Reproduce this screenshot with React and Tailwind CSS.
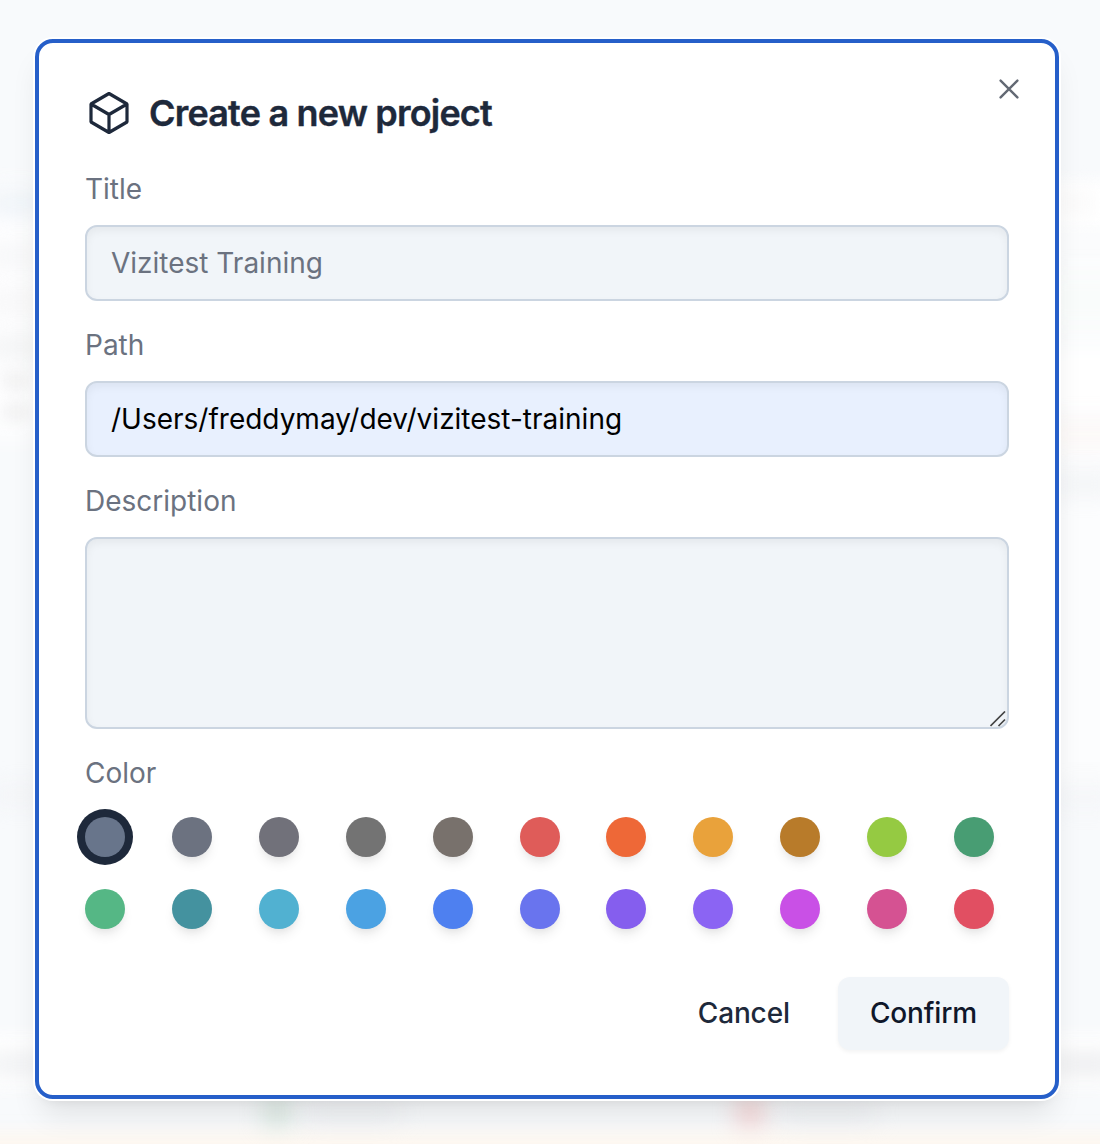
const swatches = [
  'bg-[#68758b]', 'bg-[#6c7280]', 'bg-[#71717a]', 'bg-[#737373]', 'bg-[#78716c]', 'bg-[#df5c59]',
  'bg-[#ee6837]', 'bg-[#e9a23b]', 'bg-[#b87b2a]', 'bg-[#95ca42]', 'bg-[#489d73]',
  'bg-[#55b785]', 'bg-[#44929f]', 'bg-[#51b1d1]', 'bg-[#4ba2e3]', 'bg-[#4e80f0]', 'bg-[#6974ee]',
  'bg-[#855eee]', 'bg-[#8b64f3]', 'bg-[#c950e6]', 'bg-[#d55292]', 'bg-[#e14f62]',
];

const smudges = [
  'left-[-20px] top-[180px] w-[60px] h-[260px] bg-white/80 blur-md',
  'left-[-10px] top-[194px] w-[60px] h-[18px] bg-[#e8eff5] blur-md',
  'left-[-10px] top-[248px] w-[60px] h-[16px] bg-[#f3f4f5] blur-md',
  'left-[-10px] top-[294px] w-[60px] h-[16px] bg-[#f4f4f4] blur-md',
  'left-[-10px] top-[340px] w-[60px] h-[14px] bg-[#eceeee] blur-md',
  'left-[4px] top-[374px] w-[24px] h-[14px] bg-[#ededed] blur-sm',
  'left-[4px] top-[405px] w-[24px] h-[14px] bg-[#ededed] blur-sm',
  'left-[1040px] top-[180px] w-[90px] h-[50px] bg-white blur-sm',
  'left-[1058px] top-[194px] w-[32px] h-[18px] bg-[#f7f6f6] blur-md',
  'left-[1040px] top-[230px] w-[90px] h-[560px] bg-white/50 blur-md',
  'left-[1040px] top-[275px] w-[90px] h-[50px] bg-[#f9fcfb] blur-md',
  'left-[1040px] top-[350px] w-[90px] h-[60px] bg-white blur-md',
  'left-[1040px] top-[422px] w-[90px] h-[24px] bg-[#fdf8f6] blur-md',
  'left-[1050px] top-[476px] w-[70px] h-[16px] bg-[#eff1f4] blur-md',
  'left-[-10px] top-[788px] w-[60px] h-[14px] bg-[#f1f2f5] blur-md',
  'left-[1050px] top-[790px] w-[70px] h-[14px] bg-[#f3f4f7] blur-md',
  'left-[-20px] top-[1034px] w-[1140px] h-[55px] bg-white blur-sm',
  'left-[-10px] top-[1056px] w-[60px] h-[16px] bg-[#e8eaed] blur-md',
  'left-[1050px] top-[1056px] w-[70px] h-[16px] bg-[#e4e5e8] blur-md',
  'left-[-20px] top-[1132px] w-[1140px] h-[30px] bg-[#fdf7f0] blur-sm',
  'left-[265px] top-[1100px] w-[24px] h-[24px] bg-[#d0e3d8] blur-md',
  'left-[738px] top-[1100px] w-[24px] h-[24px] bg-[#f5c9c9] blur-md',
  'left-[305px] top-[1106px] w-[95px] h-[12px] bg-[#e9ebee] blur-md',
  'left-[780px] top-[1106px] w-[95px] h-[12px] bg-[#e9ebee] blur-md',
];

const field =
  'block w-full rounded-xl border-2 border-[#cbd5e1] px-6 text-[28px] leading-10 shadow-[inset_0_4px_8px_rgba(0,0,0,0.05)] outline-none';

function Field({ label, children }) {
  return (
    <label className="flex flex-col gap-4">
      <span className="text-[28px] leading-10 text-[#6b7280]">{label}</span>
      {children}
    </label>
  );
}

export default function App() {
  return (
    <div className="relative h-[1144px] w-[1100px] overflow-hidden bg-[#f8fafc] pl-[35px] pt-[39px] font-['Inter',sans-serif]">
      <div aria-hidden="true">
        {smudges.map((s) => (
          <div key={s} className={`absolute ${s}`} />
        ))}
      </div>
      <div
        role="dialog"
        className="relative flex h-[1060px] w-[1024px] flex-col rounded-[18px] border-4 border-[#265fc9] bg-white px-[46px] pt-[46px] shadow-[0_0_0_2px_#fff,0_20px_30px_-6px_rgba(0,0,0,0.1),0_8px_12px_-8px_rgba(0,0,0,0.1)]"
      >
        <button aria-label="Close" className="absolute right-[34px] top-[34px] size-6">
          <svg viewBox="0 0 24 24" className="size-6" fill="none" stroke="#636974" strokeWidth="2.4" strokeLinecap="round">
            <path d="M3.6 3.6l16.8 16.8M20.4 3.6L3.6 20.4" />
          </svg>
        </button>

        <h1 className="flex h-12 items-center gap-4 text-[36px] font-semibold leading-none tracking-[-0.0225em] text-[#1e293b]">
          <svg viewBox="0 0 24 24" className="size-12" fill="none" stroke="currentColor" strokeWidth="1.6" strokeLinejoin="bevel">
            <path d="m21 7.5-9-5.25L3 7.5v9l9 5.25 9-5.25zM3 7.5l9 5.25 9-5.25M12 12.75v9" />
          </svg>
          <span className="[-webkit-text-stroke:0.4px_currentColor]">Create a new project</span>
        </h1>

        <div className="mt-8 flex flex-col gap-6">
          <Field label="Title">
            <input className={`${field} h-[76px] bg-[#f1f5f9] placeholder:text-[#6b7280]`} placeholder="Vizitest Training" />
          </Field>
          <Field label="Path">
            <input className={`${field} h-[76px] bg-[#e8f0fe] text-black`} defaultValue="/Users/freddymay/dev/vizitest-training" />
          </Field>
          <Field label="Description">
            <span className="relative block">
              <textarea className={`${field} h-[192px] resize-none bg-[#f1f5f9]`} />
              <svg viewBox="0 0 16 16" className="absolute bottom-[2px] right-[3px] size-4" fill="none" stroke="#444" strokeWidth="1.7">
                <path d="M0.5 15L15 0.5M8.5 15L15 8.5" />
              </svg>
            </span>
          </Field>
          <div className="flex flex-col gap-6">
            <span className="text-[28px] leading-10 text-[#6b7280]">Color</span>
            <div className="grid grid-cols-11 gap-8">
              {swatches.map((c, i) => (
                <button
                  key={c}
                  className={`size-10 rounded-full ${c} ${
                    i === 0
                      ? 'shadow-[0_0_0_8px_#1e293b]'
                      : 'shadow-[0_8px_12px_-2px_rgba(0,0,0,0.08),0_4px_8px_-4px_rgba(0,0,0,0.08)]'
                  }`}
                />
              ))}
            </div>
          </div>
        </div>

        <div className="mt-12 flex justify-end gap-4 text-[28px] font-medium leading-10 tracking-[-0.005em]">
          <button className="h-[73px] px-8 pb-[2px] text-[#1e293b]">Cancel</button>
          <button className="h-[73px] rounded-xl bg-[#f1f5f9] px-8 pb-[2px] text-[#0f172a] shadow-[0_2px_4px_rgba(0,0,0,0.05)]">
            Confirm
          </button>
        </div>
      </div>
    </div>
  );
}
